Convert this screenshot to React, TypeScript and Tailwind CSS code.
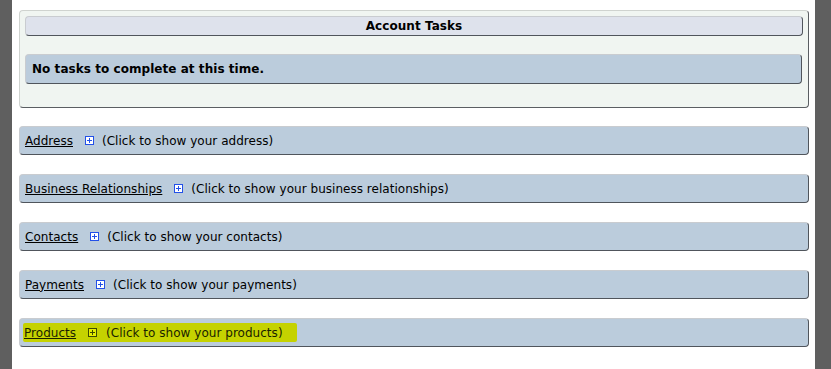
import { ReactNode } from "react";

const sections = [
  { title: "Address", hint: "(Click to show your address)" },
  { title: "Business Relationships", hint: "(Click to show your business relationships)" },
  { title: "Contacts", hint: "(Click to show your contacts)" },
  { title: "Payments", hint: "(Click to show your payments)" },
  { title: "Products", hint: "(Click to show your products)", marked: true },
];

function PlusBox({ marked }: { marked?: boolean }) {
  return (
    <span
      className={`inline-flex h-[9px] w-[9px] items-center justify-center border ${
        marked ? "border-[#3d4a00] bg-[#e4ef00]" : "border-[#2250e8] bg-white"
      }`}
    >
      <svg width="5" height="5" viewBox="0 0 5 5" shapeRendering="crispEdges">
        <path d="M2.5 0v5M0 2.5h5" stroke={marked ? "#3d4a00" : "#2250e8"} strokeWidth="1" />
      </svg>
    </span>
  );
}

function Bar({ children, className = "" }: { children: ReactNode; className?: string }) {
  return (
    <div
      className={`rounded-[4px] border border-t-[#c9ccd0] border-l-[#c9ccd0] border-r-[#50555c] border-b-[#50555c] ${className}`}
    >
      {children}
    </div>
  );
}

export default function App() {
  return (
    <div
      className="flex h-[369px] w-[831px] bg-[#5f5f5f] text-[12px] text-black"
      style={{ fontFamily: "'DejaVu Sans', Verdana, sans-serif" }}
    >
      <div className="ml-[12px] h-full w-[803px] bg-white pl-[7px] pr-[6px] pt-[10px]">
        {/* Account Tasks */}
        <div className="h-[98px] rounded-[4px] border border-t-[#cfd3cf] border-l-[#cfd3cf] border-r-[#5a5e62] border-b-[#5a5e62] bg-[#f0f5f1] px-[5px] pt-[5px]">
          <Bar className="flex h-[20px] items-center justify-center bg-[#dee2ec] font-bold tracking-[0.05px]">
            Account Tasks
          </Bar>
          <Bar className="mt-[18px] mr-[1px] flex h-[30px] items-center bg-[#bbccdc] pl-[6px] font-bold tracking-[0.05px]">
            No tasks to complete at this time.
          </Bar>
        </div>

        <div className="mt-[18px] flex flex-col gap-[19px] tracking-[0.03px]">
          {sections.map((s) => (
            <Bar key={s.title} className="flex h-[29px] items-center bg-[#bbccdc] pl-[5px]">
              {s.marked ? (
                <span className="-ml-[2px] flex h-[19px] items-center rounded-[2px] bg-[#c5d200] pl-[1px] pr-[14px] text-[#1a1f00]">
                  <span className="underline">{s.title}</span>
                  <span className="ml-[12px] mr-[9px] flex">
                    <PlusBox marked />
                  </span>
                  <span>{s.hint}</span>
                </span>
              ) : (
                <>
                  <span className="underline">{s.title}</span>
                  <span className="ml-[12px] mr-[8px] flex">
                    <PlusBox />
                  </span>
                  <span>{s.hint}</span>
                </>
              )}
            </Bar>
          ))}
        </div>
      </div>
    </div>
  );
}
